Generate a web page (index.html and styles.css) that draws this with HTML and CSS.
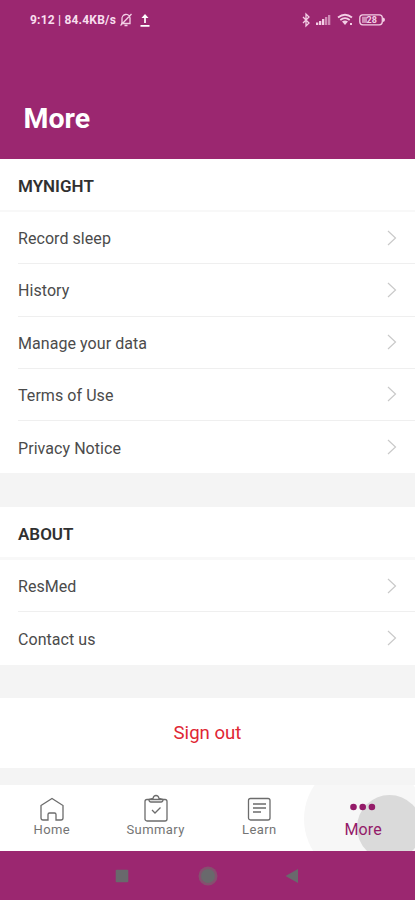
FILE: index.html
```html
<!DOCTYPE html>
<html lang="en">
<head>
<meta charset="utf-8">
<title>More</title>
<link rel="stylesheet" href="styles.css">
</head>
<body>
<div class="screen">
  <header class="header">
    <div class="status">
      <span class="clock">9:12 | 84.4KB/s</span>
      <svg class="bell" width="14" height="14" viewBox="0 0 14 14"><path d="M3 10.500V6a4 4 0 0 1 8-1v5.500H2M5.500 12.500h3M12.500 1L1.500 12.500"/></svg>
      <svg class="upload" width="10" height="13" viewBox="0 0 10 13"><path class="solid" d="M5 0L8.500 4H1.500z"/><path d="M5 3v6M.5 11.800h9"/></svg>
      <svg class="system" width="84" height="16" viewBox="0 0 84 16">
        <path d="M1 5l6 6-3 3V2l3 3-6 6"/>
        <path class="solid" d="M14 10.500h2.300V13H14zM17 9h2.300v4H17zM20 7h2.300v6H20z"/>
        <path class="solid faint" d="M23 5h2.300v8H23zM26 3h2.300v10H26z"/>
        <path class="wave" d="M36 5.500q7-5.500 14 0M38.300 8q4.700-3.700 9.400 0"/>
        <path class="solid" d="M40 9.500q3-2 6 0L43 13zM48 11h2v2h-2z"/>
        <rect x="57.800" y="2.800" width="22.500" height="10" rx="3"/>
        <path class="solid" d="M81 5.500q2 .5 2 2.300T81 10z"/>
        <path class="solid faint" d="M60 4.700h5v6.200h-5z"/>
        <text x="64.500" y="10.900">28</text>
      </svg>
    </div>
    <h1>More</h1>
  </header>
  <main>
    <section class="group mynight">
      <h2>MYNIGHT</h2>
      <ul>
        <li><span>Record sleep</span><svg class="chev" viewBox="0 0 10 16"><path d="M1 1l7.500 7L1 15"/></svg></li>
        <li><span>History</span><svg class="chev" viewBox="0 0 10 16"><path d="M1 1l7.500 7L1 15"/></svg></li>
        <li><span>Manage your data</span><svg class="chev" viewBox="0 0 10 16"><path d="M1 1l7.500 7L1 15"/></svg></li>
        <li><span>Terms of Use</span><svg class="chev" viewBox="0 0 10 16"><path d="M1 1l7.500 7L1 15"/></svg></li>
        <li><span>Privacy Notice</span><svg class="chev" viewBox="0 0 10 16"><path d="M1 1l7.500 7L1 15"/></svg></li>
      </ul>
    </section>
    <section class="group about">
      <h2>ABOUT</h2>
      <ul>
        <li><span>ResMed</span><svg class="chev" viewBox="0 0 10 16"><path d="M1 1l7.500 7L1 15"/></svg></li>
        <li><span>Contact us</span><svg class="chev" viewBox="0 0 10 16"><path d="M1 1l7.500 7L1 15"/></svg></li>
      </ul>
    </section>
    <div class="signout">Sign out</div>
  </main>
  <nav class="tabs">
    <div class="tab"><svg width="26" height="28" viewBox="0 0 26 28"><path d="M2 11.500L13 4.500l11 7V24q0 2-2 2h-5v-5.500q0-1.500-1.500-1.500h-5Q9 19 9 20.500V26H4q-2 0-2-2z"/></svg><span>Home</span></div>
    <div class="tab"><svg width="26" height="28" viewBox="0 0 26 28"><rect x="2" y="5.500" width="22" height="21.500" rx="2"/><path d="M6 5.500q0 2.500 2 2.500h10q2 0 2-2.500l-4-1q-.5-3-3-3t-3 3zM9 16l3 3 5.500-5.500"/></svg><span>Summary</span></div>
    <div class="tab"><svg width="26" height="28" viewBox="0 0 26 28"><rect x="2.500" y="4.500" width="21.500" height="21.500" rx="2"/><path d="M7 10h13M7 14h13M7 18h8"/></svg><span>Learn</span></div>
    <div class="tab active"><i class="halo"></i><i class="touch"></i><svg width="26" height="28" viewBox="0 0 26 28"><circle cx="3.500" cy="13" r="3.300"/><circle cx="12.700" cy="13" r="3.300"/><circle cx="21.900" cy="13" r="3.300"/></svg><span>More</span></div>
  </nav>
  <div class="sysnav">
    <svg width="14" height="14" viewBox="0 0 14 14"><rect x=".7" y=".7" width="12.600" height="12.600" rx="1"/></svg>
    <svg width="20" height="20" viewBox="0 0 20 20"><circle class="ring" cx="10" cy="10" r="9.500"/><circle cx="10" cy="10" r="7"/></svg>
    <svg class="back" width="14" height="14" viewBox="0 0 14 14"><path d="M.5 7L13 0v14z"/></svg>
  </div>
</div>
</body>
</html>
```
FILE: styles.css
```css
* { box-sizing: border-box; }
body { margin: 0; font-family: Roboto, "Liberation Sans", sans-serif; background: #f4f4f4; }
h1, h2, ul { margin: 0; padding: 0; list-style: none; }
svg { fill: none; flex: none; }
.screen { display: flex; flex-direction: column; width: 415px; height: 900px; overflow: hidden; }

.header { height: 159px; background: #9b2770; color: #fff; flex: none; }
.status { display: flex; align-items: center; height: 40px; padding-left: 30px; }
.status svg { stroke: #f3cfe5; stroke-width: 1.3; }
.status .solid { fill: #f3cfe5; stroke: none; }
.status .faint { opacity: .6; }
.status .wave { stroke-width: 1.8; }
.status text { font-size: 9px; font-weight: 700; fill: #f3cfe5; stroke: none; }
.clock { width: 88px; font-size: 12px; font-weight: 700; letter-spacing: .2px; color: #f8deee; white-space: nowrap; }
.status .bell { margin-left: 1px; }
.status .upload { margin-left: 7px; stroke: #fff; stroke-width: 1.7; }
.status .upload .solid { fill: #fff; }
.status .system { margin-left: auto; margin-right: 29px; }
h1 { padding: 61px 0 0 23.500px; font-size: 28.500px; line-height: 36px; font-weight: 700; }

main { height: 626px; flex: none; }
.group { background: #fff; color: #4b4b4b; }
h2 { height: 53px; padding-left: 18px; border-bottom: 2px solid #f8f8f8; font-size: 17px; line-height: 54px; font-weight: 600; color: #303030; }
.mynight { height: 314px; margin-bottom: 34px; }
.about { height: 158px; margin-bottom: 33px; }
.about h2 { border-bottom-width: 3px; }
li { display: flex; align-items: center; justify-content: space-between; height: 52.250px; margin-left: 18px; padding-right: 18px; border-bottom: 1.500px solid #efefef; font-size: 16px; letter-spacing: .06px; }
li span { padding-top: 2px; }
li:last-child { border-bottom: 0; }
.chev { width: 10px; height: 16px; stroke: #c9c9c9; stroke-width: 1.200; }
.signout { height: 70px; background: #fff; color: #e02634; text-align: center; font-size: 18.600px; line-height: 71px; }

.tabs { position: relative; display: flex; height: 66px; flex: none; overflow: hidden; background: #fff; }
.tab { position: relative; display: flex; flex-direction: column; align-items: center; width: 103.750px; padding-top: 9px; font-size: 13px; line-height: 15px; letter-spacing: .4px; color: #747474; }
.tab svg { stroke: #6c6c6c; stroke-width: 1.300; }
.active { color: #941b69; font-size: 16px; letter-spacing: .1px; }
.active svg, .active span { position: relative; }
.active svg { fill: #941b69; stroke: none; }
.halo, .touch { position: absolute; border-radius: 50%; }
.halo { left: -7px; top: -26px; width: 120px; height: 120px; background: #f7f7f7; }
.touch { left: 46px; top: 10px; width: 65px; height: 65px; background: #dadada; }

.sysnav { display: flex; align-items: center; height: 49px; padding-left: 115px; background: #9b2770; }
.sysnav svg { fill: #69696c; }
.sysnav svg + svg { margin-left: 69px; }
.sysnav svg.back { margin-left: 67px; }
.sysnav .ring { fill: #85506f; }
```
